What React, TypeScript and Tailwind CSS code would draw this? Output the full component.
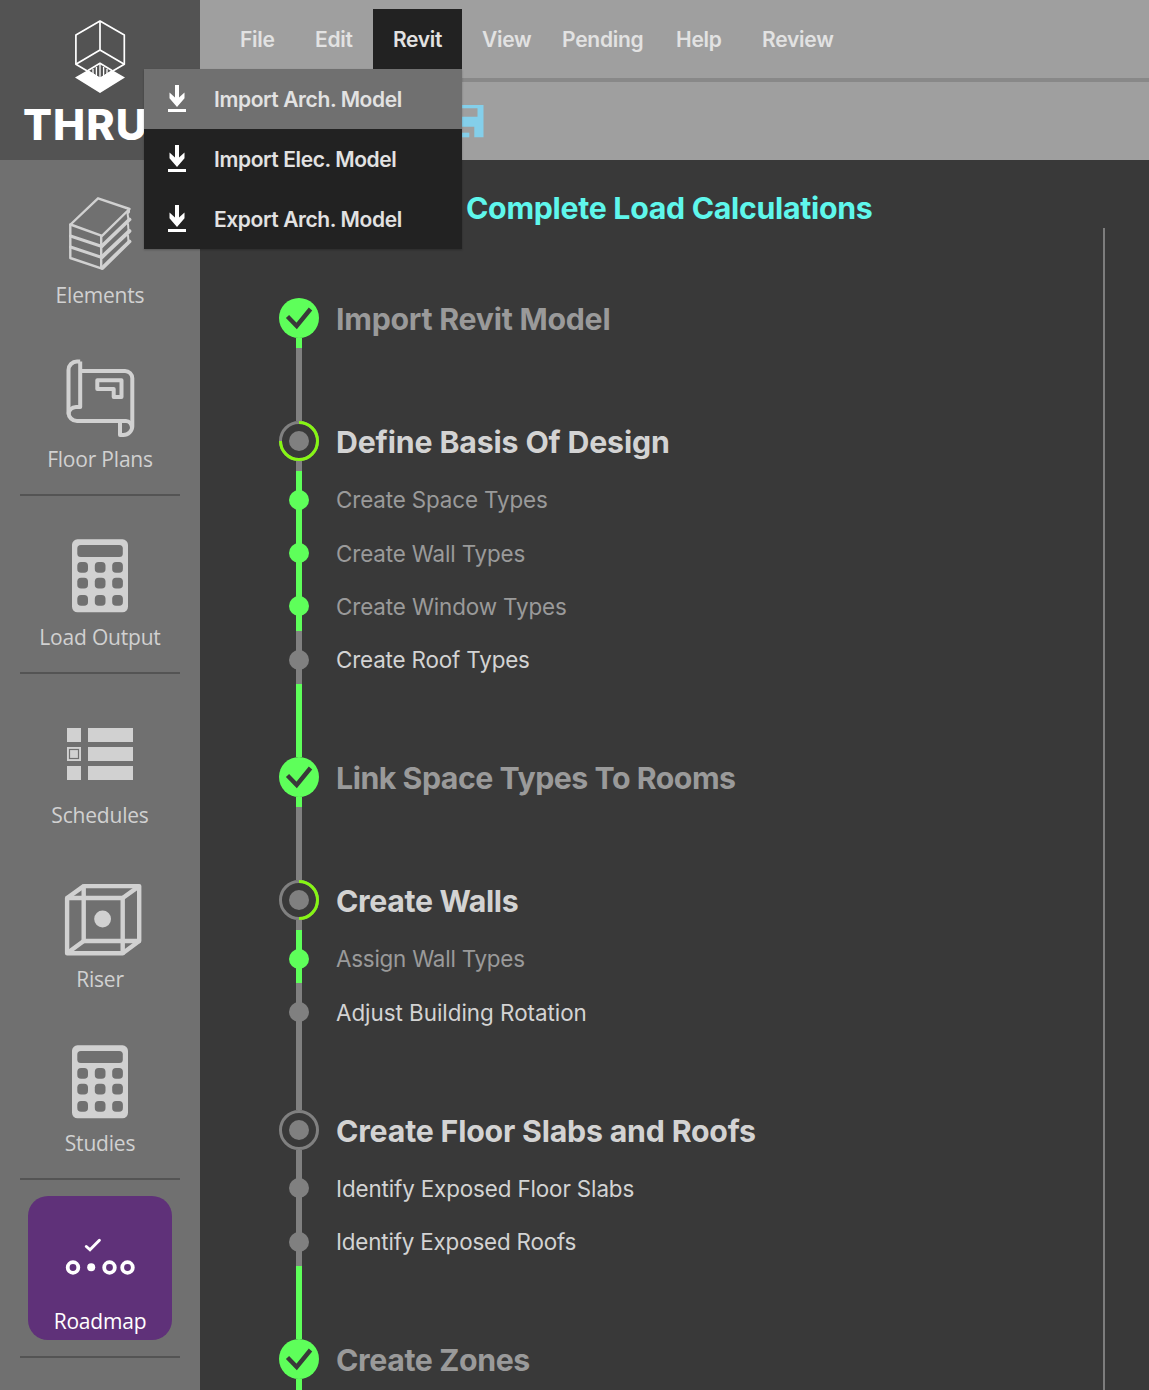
import type { ReactNode } from "react";

type StepState = "done" | "partial" | "open";

interface SubStep {
  label: string;
  done: boolean;
  track: string;
}

interface Step {
  label: string;
  state: StepState;
  progress: number;
  track: string;
  subs: SubStep[];
}

const steps: Step[] = [
  { label: "Import Revit Model", state: "done", progress: 1, track: "tracking-[-0.25px]", subs: [] },
  {
    label: "Define Basis Of Design",
    state: "partial",
    progress: 0.75,
    track: "tracking-[-0.16px]",
    subs: [
      { label: "Create Space Types", done: true, track: "tracking-[-0.13px]" },
      { label: "Create Wall Types", done: true, track: "tracking-[-0.14px]" },
      { label: "Create Window Types", done: true, track: "tracking-[-0.12px]" },
      { label: "Create Roof Types", done: false, track: "tracking-[-0.16px]" },
    ],
  },
  { label: "Link Space Types To Rooms", state: "done", progress: 1, track: "tracking-[-0.48px]", subs: [] },
  {
    label: "Create Walls",
    state: "partial",
    progress: 0.5,
    track: "tracking-[-0.36px]",
    subs: [
      { label: "Assign Wall Types", done: true, track: "tracking-[-0.23px]" },
      { label: "Adjust Building Rotation", done: false, track: "tracking-[-0.02px]" },
    ],
  },
  {
    label: "Create Floor Slabs and Roofs",
    state: "open",
    progress: 0,
    track: "tracking-[-0.2px]",
    subs: [
      { label: "Identify Exposed Floor Slabs", done: false, track: "tracking-[-0.13px]" },
      { label: "Identify Exposed Roofs", done: false, track: "tracking-[-0.18px]" },
    ],
  },
  { label: "Create Zones", state: "done", progress: 1, track: "tracking-[-0.39px]", subs: [] },
];

function Marker({ state, progress }: { state: StepState; progress: number }) {
  if (state === "done") {
    return (
      <svg width="40" height="40" viewBox="0 0 40 40" className="block shrink-0">
        <circle cx="20" cy="20" r="20" fill="#5eff5a" />
        <path d="M8.5 18.5 L17.7 28 L31.5 11" fill="none" stroke="#393939" strokeWidth="4.4" />
      </svg>
    );
  }
  return (
    <svg width="40" height="40" viewBox="0 0 40 40" className="block shrink-0">
      <circle cx="20" cy="20" r="18.5" fill="none" stroke="#808080" strokeWidth="3" />
      {progress > 0 && (
        <circle
          cx="20"
          cy="20"
          r="18.5"
          fill="none"
          stroke="#86f613"
          strokeWidth="3"
          pathLength={1}
          strokeDasharray={`${progress} 1`}
          transform="rotate(-90 20 20)"
        />
      )}
      <circle cx="20" cy="20" r="10" fill="#808080" />
    </svg>
  );
}

function StepBlock({ step, first }: { step: Step; first: boolean }) {
  const done = step.state === "done";
  const line = done ? "bg-[#5eff5a]" : "bg-[#808080]";
  return (
    <section>
      {!first && (
        <div className="flex h-[73.5px] w-10 justify-center">
          <div className={`w-1.5 ${line}`} />
        </div>
      )}
      <div className="flex h-[49.5px]">
        <div className="flex w-10 flex-col items-center">
          <Marker state={step.state} progress={step.progress} />
          <div className={`w-1.5 flex-1 ${line}`} />
        </div>
        <h2
          className={`ml-[17px] whitespace-nowrap text-[30.3px] leading-[42px] font-bold ${step.track} ${
            done ? "text-[#9a9a9a]" : "text-[#d3d3d3]"
          }`}
        >
          {step.label}
        </h2>
      </div>
      {step.subs.map((sub) => (
        <div key={sub.label} className="flex h-[53.25px]">
          <div className="flex w-10 flex-col items-center">
            <div className={`h-5 w-1.5 ${sub.done ? "bg-[#5eff5a]" : "bg-[#808080]"}`} />
            <div className={`-my-px size-5 rounded-full ${sub.done ? "bg-[#5eff5a]" : "bg-[#808080]"}`} />
            <div className={`w-1.5 flex-1 ${sub.done ? "bg-[#5eff5a]" : "bg-[#808080]"}`} />
          </div>
          <p
            className={`mt-[13.6px] ml-[17px] whitespace-nowrap text-[22.4px] leading-8 ${sub.track} ${
              sub.done ? "text-[#9a9a9a]" : "text-[#d3d3d3]"
            }`}
          >
            {sub.label}
          </p>
        </div>
      ))}
    </section>
  );
}

function BooksIcon() {
  return (
    <svg width="144" height="109" viewBox="28 170 144 109" fill="none" stroke="#d1d1d1" strokeWidth="2.4" strokeLinejoin="round" strokeLinecap="round">
      <path d="M98 198.3 L129.5 209 L102 235.8 L70.5 224.5 Z" />
      <path d="M70.3 224.5 V258 L102 268.6 M101.2 236 V268" />
      <path d="M70.5 236 L102 246.5 M70.5 247 L102 257.5" strokeWidth="3" />
      <path d="M102.5 245.5 L129.5 219.5 M102.5 256.5 L129.5 231 M102.5 267.8 L129.5 241.5" strokeWidth="3.8" />
      <path d="M129 209 V212 L127.5 213.5 L128.5 219.5 M128 224 L128.5 230.5 M128 235.5 L128.5 241.5" strokeWidth="2" />
    </svg>
  );
}

function FloorPlanIcon() {
  return (
    <svg width="144" height="109" viewBox="28 334 144 109" fill="none" stroke="#d1d1d1" strokeWidth="4" strokeLinejoin="round">
      <path d="M80.2 361.5 H77 a8.5 8.5 0 0 0 -8.5 8.5 V412.5 a8.5 8.5 0 0 0 8.5 8.5 H126 a6 7 0 0 1 6 7" />
      <path d="M80.2 361.5 V407 H76 a7.5 7.5 0 0 0 -7.5 7.5" />
      <path d="M80.2 371 H125 a7.3 7.3 0 0 1 7.3 7.3 V426 a9 9 0 0 1 -9 9 H120 V421" />
      <path d="M97.3 380.3 H121.5 V397 H113.7 V389 H97.3 Z" />
    </svg>
  );
}

function CalculatorIcon() {
  return (
    <svg width="144" height="109" viewBox="28 512 144 109">
      <rect x="72" y="539.3" width="56" height="73" rx="5.5" fill="#d1d1d1" />
      <g fill="#707070">
        <rect x="77.3" y="545" width="45.5" height="12" rx="3.5" />
        {[562, 577.8, 595].map((y) =>
          [77.3, 94.8, 112.2].map((x) => <rect key={`${x}-${y}`} x={x} y={y} width="10.7" height="10.7" rx="3.8" />),
        )}
      </g>
    </svg>
  );
}

function SchedulesIcon() {
  return (
    <svg width="144" height="109" viewBox="28 690 144 109" fill="#d1d1d1">
      {[728, 747, 766].map((y) => (
        <g key={y}>
          <rect x="67" y={y} width="14" height="14" />
          <rect x="88" y={y} width="45" height="14" />
        </g>
      ))}
      <rect x="69.5" y="749.5" width="9" height="9" fill="none" stroke="#707070" strokeWidth="1.2" />
    </svg>
  );
}

function RiserIcon() {
  return (
    <svg width="144" height="109" viewBox="28 854 144 109" fill="none" stroke="#d1d1d1" strokeWidth="4.4" strokeLinejoin="round">
      <path d="M67.1 898 H122.7 V953.3 H67.1 Z" />
      <path d="M83.7 886.1 H139.2 V941 H83.7 Z" />
      <path d="M67.1 898 L83.7 886.1 M122.7 898 L139.2 886.1 M67.1 953.3 L83.7 941 M122.7 953.3 L139.2 941" />
      <circle cx="102.6" cy="919" r="8.4" fill="#d1d1d1" stroke="none" />
    </svg>
  );
}

function RoadmapIcon() {
  return (
    <svg width="144" height="109" viewBox="28 1196 144 109" fill="none" stroke="#fff">
      <path d="M86.3 1246.5 L90 1249.8 L99.4 1240.3" strokeWidth="3" strokeLinecap="round" />
      <g strokeWidth="3.8">
        <circle cx="73" cy="1267.5" r="5.3" />
        <circle cx="109.5" cy="1267.5" r="5.3" />
        <circle cx="127.5" cy="1267.5" r="5.3" />
      </g>
      <circle cx="91.2" cy="1267.3" r="4" fill="#fff" stroke="none" />
    </svg>
  );
}

function NavItem({ icon, label, active = false }: { icon: ReactNode; label: string; active?: boolean }) {
  return (
    <a
      className={`flex h-36 w-36 shrink-0 flex-col items-center rounded-[20px] ${
        active ? "bg-[#5f3179] text-white" : "text-[#d1d1d1]"
      }`}
    >
      {icon}
      <span className="whitespace-nowrap font-['Open_Sans',sans-serif] text-[21px] leading-8 tracking-[-0.2px]">{label}</span>
    </a>
  );
}

function Divider() {
  return <div className="my-4 h-0.5 w-40 shrink-0 bg-[#545454]" />;
}

function Logo() {
  return (
    <div className="flex h-40 flex-col bg-[#535353]">
      <svg width="200" height="100" viewBox="0 0 200 100" className="shrink-0">
        <path d="M75 77.5 L88 70 L100 77.8 L112 70 L125 77.5 L100 93 Z" fill="#fff" />
        <g stroke="#fff" strokeWidth="1.7" fill="none" strokeLinejoin="round">
          <path d="M100 21 L124.3 35 V64.3 L100 78.5 L75.9 64.3 V35 Z" />
          <path d="M100 21 V50 L75.9 64.3 M100 50 L124.3 64.3" />
          <path d="M88 70.5 L100 63.3 L112 70.5" />
          <path d="M93 69 V74 M96.4 67 V76 M100 64 V78 M103.6 67 V76 M107 69 V74" strokeWidth="1.3" />
        </g>
      </svg>
      <div className="ml-[23px] text-[43px] leading-[48px] font-extrabold tracking-[1px] text-white">THRU</div>
    </div>
  );
}

const menuBase = "flex h-[60px] items-center pt-0.5 pl-5 whitespace-nowrap";

function MenuBar() {
  return (
    <nav className="flex h-[82px] shrink-0 border-b-4 border-[#888888] pt-[9px] pl-5 text-[21px] font-semibold tracking-[-0.25px] text-[#e2e2e2]">
      <div className={`${menuBase} w-[75px]`}>File</div>
      <div className={`${menuBase} w-[78px]`}>Edit</div>
      <div className={`${menuBase} w-[89px] bg-[#222222] tracking-[-0.35px]`}>Revit</div>
      <div className={`${menuBase} w-[80px]`}>View</div>
      <div className={`${menuBase} w-[114px]`}>Pending</div>
      <div className={`${menuBase} w-[86px]`}>Help</div>
      <div className={menuBase}>Review</div>
    </nav>
  );
}

function DownloadIcon() {
  return (
    <svg width="18" height="28" viewBox="0 0 18 28" fill="#fff">
      <path d="M7 0 H11 V12.5 L16.5 7.5 V13.3 L9 22 L1.5 13.3 V7.5 L7 12.5 Z" />
      <rect x="0" y="24" width="18" height="3" />
    </svg>
  );
}

const revitMenu = [
  { label: "Import Arch. Model", hot: true },
  { label: "Import Elec. Model", hot: false },
  { label: "Export Arch. Model", hot: false },
];

function RevitDropdown() {
  return (
    <div className="absolute top-[69px] left-[144px] z-10 w-[318px] bg-[#222222] shadow-[0_1px_2px_rgba(0,0,0,0.25)]">
      {revitMenu.map((m) => (
        <div key={m.label} className={`flex h-[60px] items-center pl-6 ${m.hot ? "bg-[#707070]" : ""}`}>
          <DownloadIcon />
          <span className="ml-7 pt-0.5 whitespace-nowrap text-[21px] font-semibold tracking-[-0.4px] text-[#e2e2e2]">{m.label}</span>
        </div>
      ))}
    </div>
  );
}

export default function App() {
  return (
    <div className="relative flex h-[1390px] w-[1149px] overflow-hidden bg-[#393939] font-['Inter',sans-serif]">
      <aside className="flex w-[200px] shrink-0 flex-col bg-[#707070]">
        <Logo />
        <div className="flex flex-col items-center pt-2.5">
          <NavItem icon={<BooksIcon />} label="Elements" />
          <div className="h-5" />
          <NavItem icon={<FloorPlanIcon />} label="Floor Plans" />
          <Divider />
          <NavItem icon={<CalculatorIcon />} label="Load Output" />
          <Divider />
          <NavItem icon={<SchedulesIcon />} label="Schedules" />
          <div className="h-5" />
          <NavItem icon={<RiserIcon />} label="Riser" />
          <div className="h-5" />
          <NavItem icon={<CalculatorIcon />} label="Studies" />
          <Divider />
          <NavItem icon={<RoadmapIcon />} label="Roadmap" active />
          <Divider />
        </div>
      </aside>

      <div className="flex min-w-0 flex-1 flex-col">
        <header className="flex h-40 shrink-0 flex-col bg-[#9f9f9f]">
          <MenuBar />
          <div className="flex pt-[23px] pl-[251px]">
            <svg width="33" height="33" viewBox="0 0 33 33" fill="#84cfea">
              <path fillRule="evenodd" d="M0 0 H32.5 V32.3 H23.3 V21.7 H8 V32.3 H4 L0 28 Z M6 3.3 H26.5 V11.7 H6 Z" />
              <rect x="11" y="27.7" width="7.3" height="4.6" />
            </svg>
          </div>
        </header>

        <main className="flex min-h-0 flex-1 flex-col">
          <h1 className="mt-[27px] ml-[266px] whitespace-nowrap text-[30.3px] leading-[42px] font-bold tracking-[-0.3px] text-[#5ff7ec]">
            Complete Load Calculations
          </h1>
          <div className="-mt-px mr-11 flex flex-1 border-r-2 border-[#7d7d7d] pt-[70.3px] pl-[79px]">
            <div className="flex flex-col">
              {steps.map((s, i) => (
                <StepBlock key={s.label} step={s} first={i === 0} />
              ))}
              <div className="flex w-10 flex-1 justify-center">
                <div className="w-1.5 bg-[#5eff5a]" />
              </div>
            </div>
          </div>
        </main>
      </div>

      <RevitDropdown />
    </div>
  );
}
